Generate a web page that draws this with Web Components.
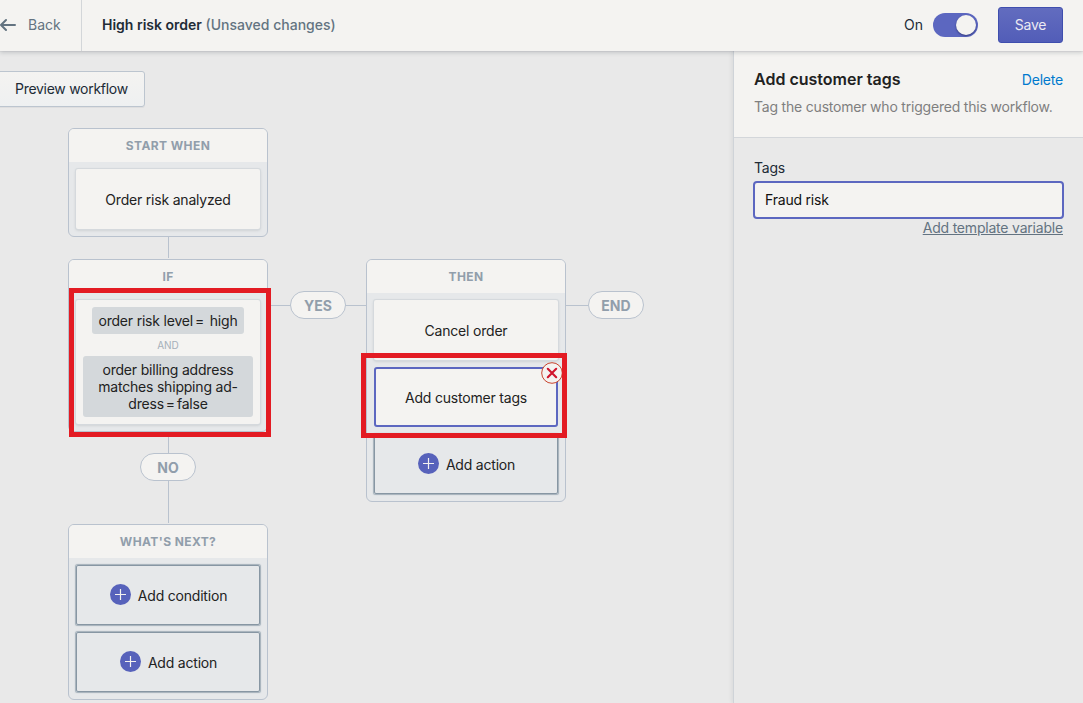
<!DOCTYPE html>
<html lang="en">
<head>
<meta charset="utf-8">
<title>High risk order</title>
<style>
    html, body { margin: 0; height: 100%; overflow: hidden; }
    body {
        font-family: Inter, "Liberation Sans", sans-serif;
        font-size: 14px;
        line-height: 20px;
        letter-spacing: -0.2px;
        color: #222;
        --surface: #f4f3f1;
        --canvas: #e9e9e9;
        --line: #b9c2ce;
        --muted: #919eab;
        --slate: #637381;
        --indigo: #5c67c0;
        --red: #e31b23;
    }
</style>
</head>
<body>
<flow-app></flow-app>

<script>
/* Shared base: clones the markup of each element into an open shadow root */
class BaseElement extends HTMLElement {
    constructor() {
        super();
        this.attachShadow({ mode: 'open' }).innerHTML = this.constructor.markup;
    }
}

/* <toggle-switch> : on/off switch */
class ToggleSwitch extends BaseElement {
    static markup = `
        <style>
            :host {
                display: flex;
                justify-content: flex-end;
                align-items: center;
                box-sizing: border-box;
                width: 45px;
                height: 24px;
                padding: 0 2px;
                border-radius: 12px;
                background: var(--indigo);
            }
            i {
                width: 20px;
                height: 20px;
                border-radius: 50%;
                background: var(--surface);
                box-shadow: 0 1px 2px rgba(20, 25, 80, 0.6);
            }
        </style>
        <i></i>`;
}
customElements.define('toggle-switch', ToggleSwitch);

/* <top-bar> : back link, title, switch and save button */
class TopBar extends BaseElement {
    static markup = `
        <style>
            :host {
                display: flex;
                align-items: center;
                position: relative;
                z-index: 5;
                box-sizing: border-box;
                height: 51px;
                padding-bottom: 1px;
                background: var(--surface);
                box-shadow: 0 0 1px rgba(60, 70, 80, 0.3), 0 2px 4px rgba(60, 70, 80, 0.2);
            }
            .back {
                display: flex;
                align-items: center;
                box-sizing: border-box;
                width: 82px;
                height: 51px;
                margin-bottom: -1px;
                padding-bottom: 1px;
                gap: 12px;
                border-right: 1px solid #d3d6d9;
                color: var(--slate);
                letter-spacing: 0;
            }
            .title { margin-left: 20px; flex: 1; color: var(--slate); font-weight: 500; letter-spacing: 0; }
            b { font-weight: 600; color: #212b36; }
            .on { margin-right: 10px; color: #212b36; letter-spacing: 0; }
            button {
                box-sizing: border-box;
                width: 65px;
                height: 36px;
                margin: 0 20px;
                padding: 0;
                border: 1px solid #3f4eae;
                border-radius: 3px;
                background: linear-gradient(#626cbf, #525db8);
                color: #eceaf2;
                font: inherit;
                letter-spacing: inherit;
            }
            svg { display: block; }
        </style>
        <div class="back">
            <svg width="16" height="14" viewBox="0 0 16 14" fill="none" stroke="#637381" stroke-width="2" stroke-linecap="round" stroke-linejoin="round"><path d="M15 7H1M6 2L1 7l5 5"/></svg>
            <span>Back</span>
        </div>
        <div class="title"><b>High risk order</b> <span>(Unsaved changes)</span></div>
        <span class="on">On</span>
        <toggle-switch></toggle-switch>
        <button>Save</button>`;
}
customElements.define('top-bar', TopBar);

/* <flow-node> : titled box of the workflow */
class FlowNode extends BaseElement {
    static markup = `
        <style>
            :host {
                display: block;
                box-sizing: border-box;
                width: 200px;
                border: 1px solid var(--line);
                border-radius: 6px;
                background: #e6e8ea;
                overflow: hidden;
            }
            h3 {
                margin: 0;
                height: 33px;
                background: var(--surface);
                color: var(--muted);
                font-size: 12px;
                font-weight: 700;
                line-height: 33px;
                text-align: center;
                letter-spacing: 0.4px;
            }
            .body { display: flex; flex-direction: column; gap: 7px; padding: 7px; }
        </style>
        <h3></h3>
        <div class="body"><slot></slot></div>`;

    connectedCallback() {
        this.shadowRoot.querySelector('h3').textContent = this.getAttribute('label');
    }
}
customElements.define('flow-node', FlowNode);

/* <flow-card> : step inside a node, "selected" draws the indigo outline */
class FlowCard extends BaseElement {
    static markup = `
        <style>
            :host {
                display: flex;
                align-items: center;
                justify-content: center;
                box-sizing: border-box;
                height: 60px;
                padding-top: 2px;
                border-radius: 2px;
                background: var(--surface);
                box-shadow: 0 0 0 1px #d5d9dd, 0 1px 3px rgba(60, 70, 80, 0.25);
            }
            :host([selected]) {
                border: 2px solid var(--indigo);
                border-radius: 3px;
                box-shadow: none;
            }
        </style>
        <slot></slot>`;
}
customElements.define('flow-card', FlowCard);

/* <add-button> : outlined button with a plus */
class AddButton extends BaseElement {
    static markup = `
        <style>
            :host {
                display: flex;
                align-items: center;
                justify-content: center;
                box-sizing: border-box;
                height: 60px;
                gap: 7px;
                padding-left: 1px;
                border: 1px solid #8796a3;
                border-radius: 2px;
                box-shadow: 0 0 1px 0.5px rgba(120, 140, 155, 0.6);
            }
            svg { margin-top: -1px; }
            span { margin-top: 2px; }
        </style>
        <svg width="21" height="21" viewBox="0 0 21 21">
            <circle cx="10.5" cy="10.5" r="10.5" fill="#5762bb"/>
            <path d="M10.5 5v11M5 10.5h11" stroke="#f4f2f0" stroke-width="1.2"/>
        </svg>
        <span><slot></slot></span>`;
}
customElements.define('add-button', AddButton);

/* <condition-card> : the two rules of the IF node */
class ConditionCard extends BaseElement {
    static markup = `
        <style>
            :host {
                display: flex;
                flex-direction: column;
                align-items: center;
                box-sizing: border-box;
                height: 124px;
                padding-top: 7px;
                border-radius: 2px;
                background: var(--surface);
                box-shadow: 0 0 0 1px #d5d9dd, 0 1px 3px rgba(60, 70, 80, 0.25);
                line-height: 17px;
                text-align: center;
            }
            .rule {
                box-sizing: border-box;
                border-radius: 3px;
                background: #d4d8db;
                white-space: nowrap;
            }
            .short { width: 152px; height: 27px; padding-top: 5px; }
            .long { width: 170px; height: 61px; padding-top: 5px; }
            .and { height: 22px; line-height: 23px; font-size: 10px; letter-spacing: 0; color: #a5afb9; }
            .eq { margin: 0 2px; }
        </style>
        <div class="rule short">order risk level<span class="eq">=</span> high</div>
        <div class="and">AND</div>
        <div class="rule long">order billing address<br>matches shipping ad-<br>dress<span class="eq">=</span>false</div>`;
}
customElements.define('condition-card', ConditionCard);

/* <flow-pill> : branch label */
class FlowPill extends BaseElement {
    static markup = `
        <style>
            :host {
                display: flex;
                align-items: center;
                justify-content: center;
                box-sizing: border-box;
                width: 56px;
                height: 28px;
                padding-top: 2px;
                border: 1px solid var(--line);
                border-radius: 14px;
                background: var(--surface);
                color: var(--muted);
                font-weight: 700;
                letter-spacing: 0;
            }
        </style>
        <slot></slot>`;
}
customElements.define('flow-pill', FlowPill);

/* <flow-canvas> : free canvas, nodes are placed by coordinates */
class FlowCanvas extends BaseElement {
    static markup = `
        <style>
            :host { display: block; position: relative; flex: 1; background: var(--canvas); overflow: hidden; }
            .at { position: absolute; left: var(--x); top: var(--y); }
            .preview {
                display: flex;
                align-items: center;
                box-sizing: border-box;
                width: 150px;
                height: 36px;
                padding: 0 0 0 19px;
                border: 1px solid #bcc5cf;
                border-radius: 3px;
                background: linear-gradient(#f4f3f1, #eef0f1);
                box-shadow: 0 1px 0 rgba(22, 29, 37, 0.05);
                color: #212b36;
                font: inherit;
                letter-spacing: -0.28px;
            }
            .wire { background: var(--line); width: var(--w, 1px); height: var(--h, 1px); }
            .mark { box-sizing: border-box; width: var(--w); height: var(--h); border: 5px solid var(--red); }
        </style>
        <button class="at preview" style="--x:-5px; --y:20px">Preview workflow</button>

        <div class="at wire" style="--x:168px; --y:186px; --h:21px"></div>
        <div class="at wire" style="--x:168px; --y:381px; --h:91px"></div>
        <div class="at wire" style="--x:268px; --y:254px; --w:98px"></div>
        <div class="at wire" style="--x:566px; --y:254px; --w:22px"></div>

        <flow-node class="at" label="START WHEN" style="--x:68px; --y:77px">
            <flow-card>Order risk analyzed</flow-card>
        </flow-node>
        <flow-node class="at" label="IF" style="--x:68px; --y:208px">
            <condition-card></condition-card>
        </flow-node>
        <flow-node class="at" label="WHAT'S NEXT?" style="--x:68px; --y:473px">
            <add-button>Add condition</add-button>
            <add-button>Add action</add-button>
        </flow-node>
        <flow-node class="at" label="THEN" style="--x:366px; --y:208px">
            <flow-card>Cancel order</flow-card>
            <flow-card selected>Add customer tags</flow-card>
            <add-button>Add action</add-button>
        </flow-node>

        <flow-pill class="at" style="--x:290px; --y:240px">YES</flow-pill>
        <flow-pill class="at" style="--x:588px; --y:240px">END</flow-pill>
        <flow-pill class="at" style="--x:140px; --y:402px">NO</flow-pill>

        <svg class="at" style="--x:541px; --y:311px" width="22" height="22" viewBox="0 0 22 22">
            <circle cx="11" cy="11" r="10.3" fill="#f4f2f0" stroke="#c9452f"/>
            <path d="M6.8 6.8l8.4 8.4M15.2 6.8l-8.4 8.4" stroke="#d0142c" stroke-width="2.1" stroke-linecap="round"/>
        </svg>
        <div class="at mark" style="--x:69px; --y:237px; --w:202px; --h:149px"></div>
        <div class="at mark" style="--x:361px; --y:302px; --w:206px; --h:85px"></div>`;
}
customElements.define('flow-canvas', FlowCanvas);

/* <side-panel> : settings of the selected step */
class SidePanel extends BaseElement {
    static markup = `
        <style>
            :host {
                display: block;
                box-sizing: border-box;
                position: relative;
                width: 350px;
                border-left: 1px solid #cfd3d8;
                background: var(--canvas);
                box-shadow: -1px 0 4px rgba(60, 70, 80, 0.1);
            }
            header {
                box-sizing: border-box;
                height: 87px;
                padding: 17px 20px 0;
                border-bottom: 1px solid #d3d6da;
                background: var(--surface);
            }
            .row { display: flex; justify-content: space-between; height: 21px; }
            h2 { margin: 0; font-size: 16px; font-weight: 600; line-height: 22px; letter-spacing: 0; color: #212121; }
            .delete { color: #007ace; margin-top: 2px; }
            p { margin: 8px 0 0; color: #7f7f7f; white-space: nowrap; }
            .form { display: flex; flex-direction: column; padding: 20px 19px; }
            label { margin-left: 1px; color: #212b36; }
            input {
                box-sizing: border-box;
                width: 311px;
                height: 38px;
                margin-top: 3px;
                padding: 0 10px 1px;
                border: 2px solid var(--indigo);
                border-radius: 4px;
                background: var(--surface);
                color: #111;
                font: inherit;
                letter-spacing: inherit;
                outline: none;
            }
            .variable { align-self: flex-end; margin: -1px 1px 0 0; color: var(--slate); text-decoration: underline; }
        </style>
        <header>
            <div class="row"><h2>Add customer tags</h2><span class="delete">Delete</span></div>
            <p>Tag the customer who triggered this workflow.</p>
        </header>
        <div class="form">
            <label>Tags</label>
            <input value="Fraud risk">
            <span class="variable">Add template variable</span>
        </div>`;
}
customElements.define('side-panel', SidePanel);

/* <flow-app> : page frame */
class FlowApp extends BaseElement {
    static markup = `
        <style>
            :host { display: flex; flex-direction: column; height: 100vh; }
            main { display: flex; flex: 1; min-height: 0; }
        </style>
        <top-bar></top-bar>
        <main>
            <flow-canvas></flow-canvas>
            <side-panel></side-panel>
        </main>`;
}
customElements.define('flow-app', FlowApp);
</script>
</body>
</html>
